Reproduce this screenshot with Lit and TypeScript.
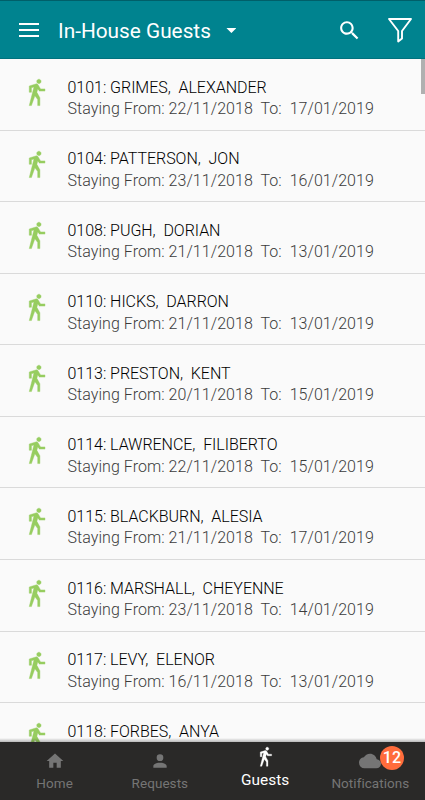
import { LitElement, html, css, svg } from "lit";
import { customElement, property } from "lit/decorators.js";
import { classMap } from "lit/directives/class-map.js";

const WALK =
  "M14.12,10H19V8.2H15.38L13.38,4.87C13.08,4.37 12.54,4.03 11.92,4.03C11.74,4.03 11.58,4.06 11.42,4.11L6,5.8V11H7.8V7.33L9.91,6.67L6,22H7.8L10.67,13.89L13,17V22H14.8V15.59L12.31,11.05L13.04,8.18M14,3.8C15,3.8 15.8,3 15.8,2C15.8,1 15,0.2 14,0.2C13,0.2 12.2,1 12.2,2C12.2,3 13,3.8 14,3.8Z";
const HOME = "M10,20V14H14V20H19V12H22L12,3L2,12H5V20H10Z";
const PERSON =
  "M12,4A4,4 0 0,1 16,8A4,4 0 0,1 12,12A4,4 0 0,1 8,8A4,4 0 0,1 12,4M12,14C16.42,14 20,15.79 20,18V20H4V18C4,15.79 7.58,14 12,14Z";
const CLOUD =
  "M19.35,10.04C18.67,6.59 15.64,4 12,4C9.11,4 6.6,5.64 5.35,8.04C2.34,8.36 0,10.91 0,14A6,6 0 0,0 6,20H19A5,5 0 0,0 24,15C24,12.36 21.95,10.22 19.35,10.04Z";
const SEARCH =
  "M15.5 14h-.79l-.28-.27C15.41 12.59 16 11.11 16 9.5 16 5.91 13.09 3 9.5 3S3 5.91 3 9.5 5.91 16 9.5 16c1.61 0 3.09-.59 4.23-1.57l.27.28v.79l5 4.99L20.49 19l-4.99-5zm-6 0C7.01 14 5 11.99 5 9.5S7.01 5 9.5 5 14 7.01 14 9.5 11.99 14 9.5 14z";

interface Guest {
  room: string;
  last: string;
  first: string;
  from?: string;
  to?: string;
}

const g = (room: string, last: string, first: string, from?: string, to?: string): Guest => ({
  room,
  last,
  first,
  from: from && from + "/11/2018",
  to: to && to + "/01/2019",
});

const GUESTS: Guest[] = [
  g("0101", "GRIMES", "ALEXANDER", "22", "17"),
  g("0104", "PATTERSON", "JON", "23", "16"),
  g("0108", "PUGH", "DORIAN", "21", "13"),
  g("0110", "HICKS", "DARRON", "21", "13"),
  g("0113", "PRESTON", "KENT", "20", "15"),
  g("0114", "LAWRENCE", "FILIBERTO", "22", "15"),
  g("0115", "BLACKBURN", "ALESIA", "21", "17"),
  g("0116", "MARSHALL", "CHEYENNE", "23", "14"),
  g("0117", "LEVY", "ELENOR", "16", "13"),
  g("0118", "FORBES", "ANYA"),
];

@customElement("ui-icon")
export class UiIcon extends LitElement {
  @property() path = "";
  static styles = css`
    :host { display: block; }
    svg { display: block; width: 100%; height: 100%; fill: currentColor; overflow: visible; }
  `;
  render() {
    return html`<svg viewBox="0 0 24 24">${svg`<path d=${this.path}></path>`}</svg>`;
  }
}

@customElement("guest-row")
export class GuestRow extends LitElement {
  @property({ attribute: false }) guest!: Guest;
  static styles = css`
    :host {
      display: flex;
      flex: none;
      box-sizing: border-box;
      height: 71.58px;
      border-bottom: 1px solid #dadada;
      padding: 17.5px 0 0 21.5px;
      white-space: pre;
    }
    .walk { width: 29px; height: 29px; margin-top: 2.5px; color: #97cd60; stroke: currentColor; stroke-width: 0.35; }
    .text { margin-left: 17px; font-size: 16px; line-height: 21.5px; font-weight: 300; }
    .name { color: #000; letter-spacing: -0.03px; }
    .stay { color: #3c3c3c; letter-spacing: 0.055px; }
  `;
  render() {
    const { room, last, first, from, to } = this.guest;
    return html`
      <ui-icon class="walk" .path=${WALK}></ui-icon>
      <div class="text"><div class="name">${`${room}: ${last},  ${first}`}</div>${
        from ? html`<div class="stay">${`Staying From: ${from}  To:  ${to}`}</div>` : ""
      }</div>
    `;
  }
}

@customElement("app-root")
export class AppRoot extends LitElement {
  static styles = css`
    :host {
      display: flex;
      flex-direction: column;
      height: 800px;
      width: 425px;
      overflow: hidden;
      background: #fafafa;
      font-family: Roboto, "Liberation Sans", sans-serif;
    }
    header {
      flex: none;
      box-sizing: border-box;
      height: 59px;
      display: flex;
      align-items: center;
      border-top: 1px solid #005f69;
      border-bottom: 1px solid #00727e;
      background: #00838f;
      color: #fff;
      padding: 1px 12px 0 19px;
    }
    .menu { width: 20px; height: 14px; display: flex; flex-direction: column; justify-content: space-between; }
    .menu i { height: 2px; background: #fff; }
    h1 { margin: 1px 0 0 19px; font-size: 20.8px; line-height: 28px; font-weight: 400; white-space: nowrap; }
    .caret { width: 10px; height: 5px; margin: 1px 0 0 15.5px; background: #fff; clip-path: polygon(0 0, 100% 0, 50% 100%); }
    .search { width: 25px; height: 25px; margin-left: auto; }
    .filter { width: 26px; height: 26px; margin-left: 25px; }
    .list { flex: 1; min-height: 0; overflow: hidden; display: flex; flex-direction: column; position: relative; }
    .thumb { position: absolute; right: 0; top: 0; width: 4px; height: 35px; background: #b0b0b0; }
    .shade { position: absolute; left: 0; right: 0; bottom: 0; height: 4px; background: linear-gradient(#0000, #0004); }
    nav {
      flex: none;
      height: 58px;
      display: flex;
      background: #2a2928;
      padding: 0 2px;
    }
    .tab {
      flex: 1;
      display: flex;
      flex-direction: column;
      align-items: center;
      color: #757575;
      font-size: 13.5px;
      line-height: 18px;
      letter-spacing: 0.05px;
    }
    .glyph { position: relative; width: 20px; height: 20px; margin: 9px 0 3px; }
    .cloud { width: 22px; height: 22px; margin: 8px 0 2px; }
    .active { color: #fff; font-size: 15.4px; }
    .active .glyph { width: 21px; height: 21px; margin: 5px 0 3px; stroke: currentColor; stroke-width: 0.35; }
    .badge {
      position: absolute;
      left: 20.5px;
      top: -4px;
      width: 24px;
      height: 24px;
      border-radius: 50%;
      background: #ff6c3c;
      color: #fff;
      font-size: 16px;
      font-weight: 500;
      line-height: 24px;
      text-align: center;
      letter-spacing: 0;
    }
  `;

  private tab(label: string, path: string, active = false, badge = "") {
    return html`<div class=${classMap({ tab: true, active })}>
      <div class=${classMap({ glyph: true, cloud: !!badge })}>
        <ui-icon .path=${path}></ui-icon>
        ${badge ? html`<span class="badge">${badge}</span>` : ""}
      </div>
      <span>${label}</span>
    </div>`;
  }

  render() {
    return html`
      <header>
        <div class="menu"><i></i><i></i><i></i></div>
        <h1>In-House Guests</h1>
        <span class="caret"></span>
        <ui-icon class="search" .path=${SEARCH}></ui-icon>
        <svg class="filter" viewBox="0 0 26 26" fill="none" stroke="#fff" stroke-width="1.9" stroke-linejoin="round">
          <path d="M2 2H24L15 14V21.5L11.2 24.5V14Z"></path>
        </svg>
      </header>
      <div class="list">
        ${GUESTS.map((guest) => html`<guest-row .guest=${guest}></guest-row>`)}
        <div class="thumb"></div>
        <div class="shade"></div>
      </div>
      <nav>
        ${this.tab("Home", HOME)}
        ${this.tab("Requests", PERSON)}
        ${this.tab("Guests", WALK, true)}
        ${this.tab("Notifications", CLOUD, false, "12")}
      </nav>
    `;
  }
}
